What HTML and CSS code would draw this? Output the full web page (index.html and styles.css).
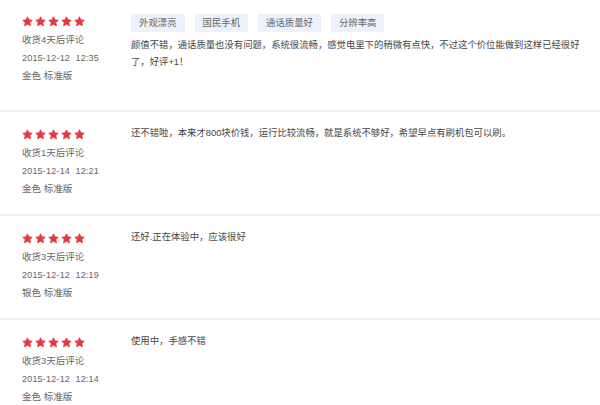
FILE: index.html
```html
<!DOCTYPE html>
<html lang="zh-CN">
<head>
<meta charset="utf-8">
<title>评价</title>
<link rel="stylesheet" href="styles.css">
</head>
<body>
<svg width="0" height="0" class="defs">
  <defs>
    <symbol id="star" viewBox="0 0 24 24">
      <path d="M12 1.8l3.1 6.6 7.2.9-5.3 5 1.4 7.1L12 17.9l-6.4 3.5 1.4-7.1-5.3-5 7.2-.9z" fill="#e4393c" stroke="#e4393c" stroke-width="1.8" stroke-linejoin="round"/>
    </symbol>
  </defs>
</svg>
<div class="list">
  <div class="review review--first">
    <div class="side">
      <div class="stars"><svg><use href="#star"/></svg><svg><use href="#star"/></svg><svg><use href="#star"/></svg><svg><use href="#star"/></svg><svg><use href="#star"/></svg></div>
      <div class="meta">收货4天后评论</div>
      <div class="meta date">2015-12-12&nbsp;&nbsp;12:35</div>
      <div class="meta">金色&nbsp;标准版</div>
    </div>
    <div class="body">
      <div class="tags"><span class="tag">外观漂亮</span><span class="tag">国民手机</span><span class="tag">通话质量好</span><span class="tag">分辨率高</span></div>
      <p class="text">颜值不错，通话质量也没有问题，系统很流畅，感觉电里下的稍微有点快，不过这个价位能做到这样已经很好了，好评+1！</p>
    </div>
  </div>
  <div class="review">
    <div class="side">
      <div class="stars"><svg><use href="#star"/></svg><svg><use href="#star"/></svg><svg><use href="#star"/></svg><svg><use href="#star"/></svg><svg><use href="#star"/></svg></div>
      <div class="meta">收货1天后评论</div>
      <div class="meta date">2015-12-14&nbsp;&nbsp;12:21</div>
      <div class="meta">金色&nbsp;标准版</div>
    </div>
    <div class="body">
      <p class="text">还不错啦，本来才800块价钱，运行比较流畅，就是系统不够好，希望早点有刷机包可以刷。</p>
    </div>
  </div>
  <div class="review">
    <div class="side">
      <div class="stars"><svg><use href="#star"/></svg><svg><use href="#star"/></svg><svg><use href="#star"/></svg><svg><use href="#star"/></svg><svg><use href="#star"/></svg></div>
      <div class="meta">收货3天后评论</div>
      <div class="meta date">2015-12-12&nbsp;&nbsp;12:19</div>
      <div class="meta">银色&nbsp;标准版</div>
    </div>
    <div class="body">
      <p class="text">还好.正在体验中，应该很好</p>
    </div>
  </div>
  <div class="review">
    <div class="side">
      <div class="stars"><svg><use href="#star"/></svg><svg><use href="#star"/></svg><svg><use href="#star"/></svg><svg><use href="#star"/></svg><svg><use href="#star"/></svg></div>
      <div class="meta">收货3天后评论</div>
      <div class="meta date">2015-12-12&nbsp;&nbsp;12:14</div>
      <div class="meta">金色&nbsp;标准版</div>
    </div>
    <div class="body">
      <p class="text">使用中，手感不错</p>
    </div>
  </div>
</div>
</body>
</html>
```
FILE: styles.css
```css
html, body {
  margin: 0;
  padding: 0;
  background: #fff;
}
body {
  font-family: "Liberation Sans", "Noto Sans CJK SC", sans-serif;
  color: #333;
  overflow: hidden;
}
.defs {
  position: absolute;
  width: 0;
  height: 0;
}
.list {
  margin-top: -1px;
}
.review {
  display: flex;
  padding: 13px 15px 16px 22px;
  border-bottom: 2px solid #eeeeee;
}
.review--first {
  padding-bottom: 25px;
}
.side {
  width: 109px;
  flex: none;
}
.stars {
  display: flex;
  gap: 2px;
  height: 12px;
  margin-top: 3px;
  margin-bottom: 4px;
  align-items: center;
}
.stars svg {
  width: 11px;
  height: 11px;
}
.meta {
  font-size: 9.5px;
  line-height: 18px;
  color: #666;
  white-space: nowrap;
}
.date {
  font-size: 9px;
  letter-spacing: 0.2px;
}
.body {
  flex: 1;
  min-width: 0;
}
.tags {
  display: flex;
  gap: 10px;
  margin-top: 2px;
  margin-bottom: 5px;
}
.tag {
  background: #edf1fb;
  color: #666;
  font-size: 9.4px;
  line-height: 18px;
  padding: 0 8px;
}
.text {
  margin: 0;
  font-size: 9.35px;
  line-height: 17px;
  color: #444;
}
```
